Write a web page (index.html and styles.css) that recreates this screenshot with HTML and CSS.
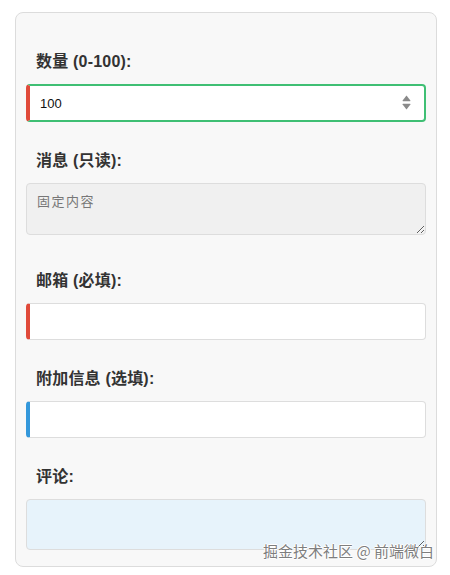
FILE: index.html
```html
<!DOCTYPE html>
<html lang="zh">
<head>
<meta charset="utf-8">
<link rel="stylesheet" href="styles.css">
</head>
<body>
<div class="card">
  <div class="group">
    <label class="label" for="qty">数量 (0-100):</label>
    <div class="number-wrap">
      <input class="field field-range" id="qty" type="number" min="0" max="100" value="100">
      <svg class="spinner" width="9" height="15" viewBox="0 0 9 15" aria-hidden="true">
        <path d="M4.5 0.6 L8.4 5.6 Q8.6 6.2 8 6.2 L1 6.2 Q0.4 6.2 0.6 5.6 Z" fill="#8a8a8a"/>
        <path d="M4.5 14.4 L8.4 9.4 Q8.6 8.8 8 8.8 L1 8.8 Q0.4 8.8 0.6 9.4 Z" fill="#8a8a8a"/>
      </svg>
    </div>
  </div>
  <div class="group group-area">
    <label class="label" for="msg">消息 (只读):</label>
    <textarea class="area area-readonly" id="msg" readonly>固定内容</textarea>
  </div>
  <div class="group">
    <label class="label" for="mail">邮箱 (必填):</label>
    <input class="field field-required" id="mail" type="text">
  </div>
  <div class="group">
    <label class="label" for="extra">附加信息 (选填):</label>
    <input class="field field-optional" id="extra" type="text">
  </div>
  <div class="group group-area">
    <label class="label" for="comment">评论:</label>
    <textarea class="area area-comment" id="comment"></textarea>
  </div>
  <div class="watermark">掘金技术社区 @ 前端微白</div>
</div>
</body>
</html>
```
FILE: styles.css
```css
html, body {
  margin: 0;
  padding: 0;
  background: #ffffff;
}
body {
  padding: 12px 0 0 15px;
  font-family: "Liberation Sans", "Noto Sans CJK SC", sans-serif;
}
.card {
  position: relative;
  box-sizing: border-box;
  width: 422px;
  height: 555px;
  padding: 38px 10px 10px 10px;
  background: #f8f8f8;
  border: 1px solid #dcdcdc;
  border-radius: 8px;
}
.group + .group {
  margin-top: 28px;
}
.group-area {
  padding-bottom: 6px;
}
.group-area + .group {
  margin-top: 29px;
}
.label {
  display: block;
  padding-left: 10px;
  margin-bottom: 11px;
  font-size: 16px;
  line-height: 22px;
  font-weight: bold;
  color: #333333;
  letter-spacing: 0.2px;
}
.number-wrap {
  position: relative;
  width: 400px;
}
.spinner {
  position: absolute;
  right: 15px;
  top: 11px;
}
.field {
  display: block;
  box-sizing: border-box;
  width: 400px;
  height: 37px;
  padding: 0 10px;
  margin: 0;
  font-family: "Liberation Sans", "Noto Sans CJK SC", sans-serif;
  font-size: 13px;
  color: #111111;
  background: #ffffff;
  border: 1px solid #dddddd;
  border-left: 4px solid #dddddd;
  border-radius: 4px;
  outline: none;
}
.field-range {
  height: 38px;
  border: 2px solid #3fbf74;
  border-left: 4px solid #e04a3a;
  padding-left: 10px;
  padding-right: 30px;
  -moz-appearance: textfield;
}
.field-range::-webkit-inner-spin-button,
.field-range::-webkit-outer-spin-button {
  -webkit-appearance: none;
  margin: 0;
}
.field-required {
  border-left-color: #e04a3a;
}
.field-optional {
  border-left-color: #3498db;
}
.area {
  display: block;
  box-sizing: border-box;
  width: 400px;
  height: 52px;
  margin: 0;
  padding: 9px 10px;
  font-family: "Noto Sans CJK SC", sans-serif;
  font-size: 13px;
  letter-spacing: 1.5px;
  line-height: 16px;
  color: #777777;
  border: 1px solid #dddddd;
  border-radius: 4px;
  resize: vertical;
  outline: none;
}
.area-readonly {
  background: #f0f0f0;
}
.area-comment {
  height: 51px;
  background: #e7f3fb;
}
.watermark {
  position: absolute;
  right: 2px;
  bottom: 6px;
  font-family: "Noto Sans CJK SC", sans-serif;
  font-size: 15px;
  line-height: 18px;
  color: #7e7e7e;
  text-shadow: 1px 0 0 #fff, -1px 0 0 #fff, 0 1px 0 #fff, 0 -1px 0 #fff;
  white-space: nowrap;
}
```
